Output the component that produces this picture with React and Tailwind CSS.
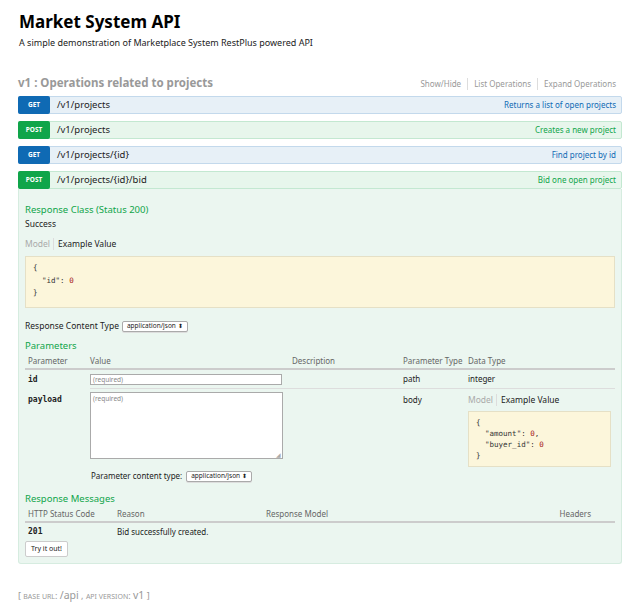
const sans = "font-['Noto_Sans','Open_Sans',sans-serif]"
const mono = "font-['DejaVu_Sans_Mono',monospace]"

function OpRow({ method, path, summary }) {
  const get = method === 'GET'
  return (
    <div
      className={`flex items-center h-[18px] rounded-[2px] border ${
        get ? 'bg-[#e7f0f7] border-[#c3d9ec]' : 'bg-[#e7f6ec] border-[#c3e8d1]'
      }`}
    >
      <span
        className={`w-[32px] h-[18px] -ml-px flex items-center justify-center rounded-[2px] text-white text-[6.5px] font-bold ${
          get ? 'bg-[#0f6ab4]' : 'bg-[#10a54a]'
        }`}
      >
        {method}
      </span>
      <span className="ml-[7px] text-[9.5px] text-[#222]">{path}</span>
      <span className={`ml-auto mr-[5px] text-[8px] ${get ? 'text-[#0f6ab4]' : 'text-[#10a54a]'}`}>
        {summary}
      </span>
    </div>
  )
}

function ModelTabs() {
  return (
    <div className="flex items-center text-[8.5px] leading-[12px]">
      <span className="text-[#aaa] pr-[3px] border-r border-[#ddd]">Model</span>
      <span className="pl-[4px] text-[#222]">Example Value</span>
    </div>
  )
}

function Select({ label }) {
  return (
    <span className="inline-flex items-center h-[11px] px-[4px] border border-[#aaa] rounded-[2px] bg-white text-[6.5px] text-[#222] shadow-[0_1px_0_#ddd]">
      {label}
      <span className="ml-[2px] text-[6px]">⬍</span>
    </span>
  )
}

// one line of the json sample: key and a red number
function JsonLine({ k, v, comma }) {
  return (
    <div className="whitespace-pre">
      {'  "' + k + '": '}
      <span className="text-[#a31515]">{v}</span>
      {comma ? ',' : ''}
    </div>
  )
}

export default function App() {
  return (
    <div className={`${sans} bg-white w-[642px] h-[607px] overflow-hidden text-[#222]`}>
      <div className="pl-[19px] pt-[11px]">
        <h1 className="text-[17px] font-bold leading-[22px] text-black">Market System API</h1>
        <p className="mt-[4px] text-[9px] leading-[12px]">
          A simple demonstration of Marketplace System RestPlus powered API
        </p>
      </div>

      <div className="ml-[18px] mr-[20px] mt-[25px]">
        <div className="flex items-end justify-between h-[16px]">
          <h2 className="text-[11.5px] font-bold text-[#999] leading-[14px]">v1 : Operations related to projects</h2>
          <div className="flex items-center text-[8px] text-[#999] mr-[6px] leading-[12px]">
            <span className="pr-[6px] border-r border-[#ddd]">Show/Hide</span>
            <span className="px-[6px] border-r border-[#ddd]">List Operations</span>
            <span className="pl-[6px]">Expand Operations</span>
          </div>
        </div>

        <div className="mt-[6px] flex flex-col gap-[7px]">
          <OpRow method="GET" path="/v1/projects" summary="Returns a list of open projects" />
          <OpRow method="POST" path="/v1/projects" summary="Creates a new project" />
          <OpRow method="GET" path="/v1/projects/{id}" summary="Find project by id" />
          <div>
            <OpRow method="POST" path="/v1/projects/{id}/bid" summary="Bid one open project" />
            <div className="bg-[#ebf6f0] border border-t-0 border-[#d6ece0] rounded-b-[3px] px-[6px] pt-[14px] pb-[6px]">
              <h4 className="text-[9.5px] text-[#10a54a] leading-[14px]">Response Class (Status 200)</h4>
              <div className="text-[8.5px] leading-[12px] mt-[1px]">Success</div>
              <div className="mt-[8px]">
                <ModelTabs />
              </div>
              <div className={`${mono} mt-[6px] h-[52px] bg-[#fcf6db] border border-[#e5e0c6] px-[7px] pt-[5px] text-[7.5px] leading-[12.5px] text-[#333]`}>
                <div>{'{'}</div>
                <JsonLine k="id" v="0" />
                <div>{'}'}</div>
              </div>

              <div className="mt-[12px] flex items-center gap-[3px] text-[8.5px] leading-[12px]">
                <span>Response Content Type</span>
                <Select label="application/json" />
              </div>

              <h4 className="mt-[7px] text-[9.5px] text-[#10a54a] leading-[14px]">Parameters</h4>
              <div className="text-[8px]">
                <div className="flex h-[17px] items-center text-[#666] border-b-2 border-[#ccc]">
                  <span className="w-[65px] pl-[3px]">Parameter</span>
                  <span className="w-[202px]">Value</span>
                  <span className="w-[111px]">Description</span>
                  <span className="w-[65px]">Parameter Type</span>
                  <span>Data Type</span>
                </div>
                <div className="flex h-[19px] items-center">
                  <span className={`${mono} w-[65px] pl-[3px] font-bold text-[8px]`}>id</span>
                  <div className="w-[202px] self-stretch flex items-center border-b border-[#ddd]">
                    <div className="w-[192px] h-[11px] border border-[#aaa] bg-white text-[6.5px] text-[#888] px-[2px] leading-[9px]">
                      (required)
                    </div>
                  </div>
                  <span className="w-[111px] self-stretch border-b border-[#ddd]" />
                  <span className="w-[65px] self-stretch flex items-center border-b border-[#ddd]">path</span>
                  <span className="flex-1 self-stretch flex items-center border-b border-[#ddd]">integer</span>
                </div>
                <div className="flex pt-[3px]">
                  <span className={`${mono} w-[65px] pl-[3px] pt-[2px] font-bold text-[8px]`}>payload</span>
                  <div className="w-[202px]">
                    <div className="relative w-[193px] h-[67px] border border-[#aaa] bg-white text-[6.5px] text-[#888] px-[2px] pt-[1px]">
                      (required)
                      <span className="absolute right-[1px] bottom-0 text-[6px] text-[#aaa] leading-none">◢</span>
                    </div>
                  </div>
                  <span className="w-[111px]" />
                  <span className="w-[65px] pt-[2px]">body</span>
                  <div className="flex-1 pt-[2px] pr-[4px]">
                    <ModelTabs />
                    <div className={`${mono} mt-[5px] h-[56px] bg-[#fcf6db] border border-[#e5e0c6] px-[7px] pt-[5px] text-[7.5px] leading-[11px] text-[#333]`}>
                      <div>{'{'}</div>
                      <JsonLine k="amount" v="0" comma />
                      <JsonLine k="buyer_id" v="0" />
                      <div>{'}'}</div>
                    </div>
                  </div>
                </div>
                <div className="ml-[66px] mt-[3px] flex items-center gap-[4px] text-[8px] leading-[12px]">
                  <span>Parameter content type:</span>
                  <Select label="application/json" />
                </div>
              </div>

              <h4 className="mt-[10px] text-[9.5px] text-[#10a54a] leading-[14px]">Response Messages</h4>
              <div className="text-[8px]">
                <div className="flex h-[17px] items-center text-[#666] border-b-2 border-[#ccc]">
                  <span className="w-[92px] pl-[3px]">HTTP Status Code</span>
                  <span className="w-[149px]">Reason</span>
                  <span className="flex-1">Response Model</span>
                  <span className="pr-[24px]">Headers</span>
                </div>
                <div className="flex h-[17px] items-center">
                  <span className={`${mono} w-[92px] pl-[3px] font-bold text-[8px]`}>201</span>
                  <span>Bid successfully created.</span>
                </div>
              </div>
              <div className="flex mt-[1px]">
                <button className="h-[16px] px-[5px] border border-[#ccc] rounded-[2px] bg-white text-[7px] leading-[14px] text-[#222]">
                  Try it out!
                </button>
              </div>
            </div>
          </div>
        </div>

        <div className="mt-[25px] text-[9px] text-[#999] leading-[12px]">
          [ <span className="text-[7px] uppercase">Base url</span>: <span className="text-[10.5px]">/api</span> ,{' '}
          <span className="text-[7px] uppercase">Api version</span>: <span className="text-[10.5px]">v1</span> ]
        </div>
      </div>
    </div>
  )
}
